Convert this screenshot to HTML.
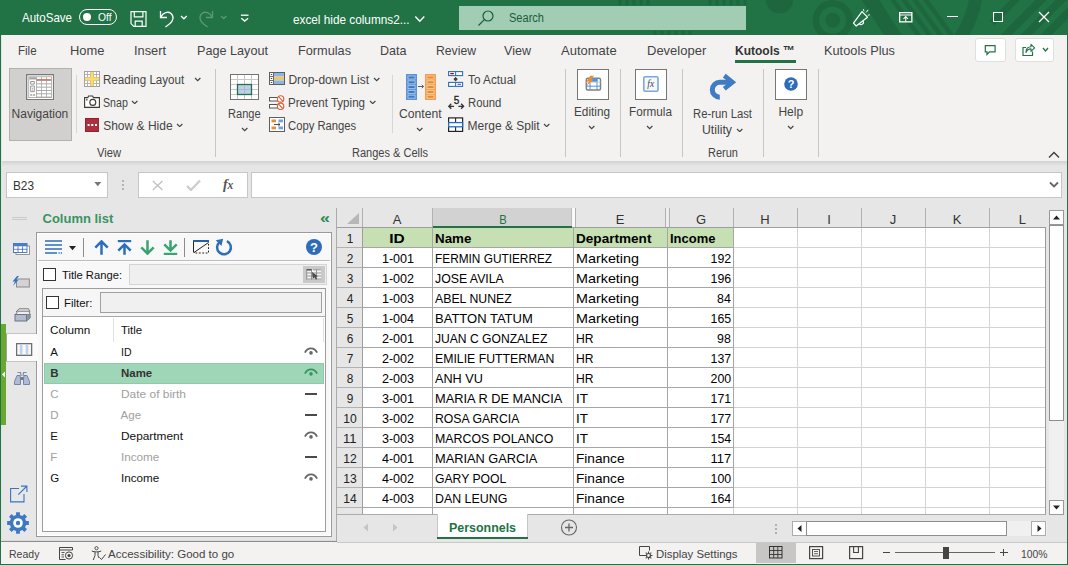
<!DOCTYPE html>
<html><head><meta charset="utf-8"><title>Excel - Kutools Column list</title><style>
html,body{margin:0;padding:0}
body{width:1068px;height:565px;overflow:hidden;position:relative;background:#e6e6e6;font-family:"Liberation Sans",sans-serif;}
.a{position:absolute;display:block}
.t{position:absolute;white-space:nowrap;line-height:1;display:block}
</style></head><body>
<div class="a" style="left:0px;top:0px;width:1068px;height:565px;background:#e6e6e6;"></div>
<div class="a" style="left:0px;top:0px;width:1068px;height:35px;background:#217346;"></div>
<svg class="a" style="left:560px;top:0px" width="508" height="35" viewBox="0 0 508 35">
<g fill="#1e673e">
<path d="M206 0 A13.500 13.500 0 0 0 233 0 Z"/>
<circle cx="272.700" cy="20.200" r="20.200"/>
</g>
<circle cx="272.700" cy="20.200" r="13.500" fill="#217346"/>
<circle cx="272.700" cy="20.200" r="7.500" fill="#1e673e"/>
<g stroke="#1e673e" fill="none">
<path d="M308 -4 L336 40" stroke-width="15"/>
<path d="M330 -4 L362 40 M341 -4 L373 40 M352 -4 L384 40 M363 -4 L395 40" stroke-width="4.500"/>
<path d="M416 -2 Q412 20 400 38" stroke-width="13"/>
<path d="M458 -3 L432 23" stroke-width="7"/>
<path d="M484 -3 L443 38 M504 -3 L463 38 M524 -3 L483 38" stroke-width="8"/>
</g>
<g stroke="#1e673e" stroke-width="3">
<path d="M60 0v5M67 0v5M74 0v5M81 0v5M88 0v5M150 0v5M157 0v5M164 0v5M171 0v5M178 0v5M185 0v5"/>
<path d="M95 31v4M102 31v4M109 31v4M116 31v4M123 31v4M130 31v4"/>
</g>
</svg>
<div class="a" style="left:1px;top:35px;width:1066px;height:126px;background:#f3f2f1;"></div>
<div class="a" style="left:1px;top:161px;width:1066px;height:5px;background:linear-gradient(#d2d2d2,#e6e6e6)"></div>
<div class="a" style="left:0px;top:35px;width:1px;height:530px;background:#217346;"></div>
<div class="a" style="left:1067px;top:35px;width:1px;height:530px;background:#217346;"></div>
<div class="a" style="left:0px;top:564px;width:1068px;height:1px;background:#217346;"></div>
<div class="a" style="left:1px;top:35px;width:1px;height:529px;background:#dfe5e0;"></div>
<span class="t" id="t1" style="top:11.15px;font-size:13px;color:#fff;left:22px;transform-origin:0 50%;transform:scaleX(0.8869);">AutoSave</span>
<div class="a" style="left:79px;top:9px;width:38px;height:16px;border:1.300px solid #fff;border-radius:8px;box-sizing:border-box"></div>
<div class="a" style="left:83px;top:13px;width:8px;height:8px;border-radius:4px;background:#fff"></div>
<span class="t" id="t2" style="top:12.17px;font-size:10.5px;color:#fff;left:98px;transform-origin:0 50%;transform:scaleX(0.9774);">Off</span>
<svg class="a" style="left:129.5px;top:10px" width="18" height="18" viewBox="0 0 18 18"><path d="M1 1.600h15v14.800h-12.200l-2.800-2.800z M4.300 1.600v5.200h8.600v-5.200 M5.200 16.400v-5.200h7v5.200" fill="none" stroke="#fff" stroke-width="1.200"/></svg>
<svg class="a" style="left:159px;top:9px" width="17" height="19" viewBox="0 0 17 19"><path d="M1.5 2v6.5h6.5 M1.8 8.2 C4 3.5 9 2 12 4.5 C15.5 7.5 14 12 11 14.5 L6.5 18" fill="none" stroke="#fff" stroke-width="1.3"/></svg>
<svg class="a" style="left:180.3px;top:15.4px" width="7.8" height="4.7" viewBox="0 0 7.8 4.7"><path d="M1 1 L3.9 3.7 L6.8 1" fill="none" stroke="#fff" stroke-width="1.4"/></svg>
<svg class="a" style="left:197px;top:9px" width="17" height="19" viewBox="0 0 17 19"><path d="M15.5 2v6.5h-6.5 M15.2 8.2 C13 3.5 8 2 5 4.5 C1.5 7.5 3 12 6 14.5 L10.5 18" fill="none" stroke="#5c9878" stroke-width="1.3"/></svg>
<svg class="a" style="left:219.5px;top:15.4px" width="7.4" height="4.5" viewBox="0 0 7.4 4.5"><path d="M1 1 L3.7 3.5 L6.4 1" fill="none" stroke="#5c9878" stroke-width="1.3"/></svg>
<svg class="a" style="left:240px;top:14px" width="10" height="9" viewBox="0 0 10 9"><path d="M0.900 1.200h7.600" stroke="#fff" stroke-width="1.300"/><path d="M1.300 4.200 L4.700 7 L8.100 4.200" fill="none" stroke="#fff" stroke-width="1.400"/></svg>
<span class="t" id="t3" style="top:12.65px;font-size:13px;color:#fff;left:293px;transform-origin:0 50%;transform:scaleX(0.9057);">excel hide columns2...</span>
<svg class="a" style="left:414px;top:15px" width="12" height="9" viewBox="0 0 12 9"><path d="M1.300 1.600 L5.800 6.300 L10.300 1.600" fill="none" stroke="#fff" stroke-width="1.400"/></svg>
<div class="a" style="left:459px;top:6px;width:287px;height:24px;background:#a0cdb4;"></div>
<svg class="a" style="left:477px;top:9px" width="18" height="18" viewBox="0 0 18 18"><circle cx="11" cy="7" r="5" fill="none" stroke="#1e5c3a" stroke-width="1.2"/><path d="M7.3 10.7 L1.5 16.5" stroke="#1e5c3a" stroke-width="1.2"/></svg>
<span class="t" id="t4" style="top:12.19px;font-size:12.5px;color:#1e5c3a;left:509px;transform-origin:0 50%;transform:scaleX(0.8836);">Search</span>
<svg class="a" style="left:852px;top:7px" width="20" height="21" viewBox="0 0 20 21"><path d="M1.500 16.200 L10 4.600 L15.500 10.200 L4.200 19 Z" fill="none" stroke="#fff" stroke-width="1.200" stroke-linejoin="round"/><path d="M7.300 16.600 A2.100 2.100 0 0 0 11 14" fill="none" stroke="#fff" stroke-width="1.100"/><path d="M12 4.200 L11.300 2.200 M14 5.500 L16.300 2.800 M15.800 8.300 L17.800 7.800" stroke="#fff" stroke-width="1"/></svg>
<svg class="a" style="left:899px;top:12px" width="14" height="11" viewBox="0 0 14 11"><rect x="0.650" y="0.650" width="12.200" height="9.200" fill="none" stroke="#fff" stroke-width="1.300"/><path d="M0.600 3h12.300 M6.750 9.500V4.800 M4.500 6.900 L6.750 4.600 L9 6.900" fill="none" stroke="#fff" stroke-width="1.100"/></svg>
<div class="a" style="left:947px;top:16px;width:10.5px;height:1.3px;background:#fff;"></div>
<div class="a" style="left:993px;top:12px;width:10px;height:10px;border:1.3px solid #fff;box-sizing:border-box"></div>
<svg class="a" style="left:1038px;top:11px" width="12" height="12" viewBox="0 0 12 12"><path d="M1 1 L11 11 M11 1 L1 11" stroke="#fff" stroke-width="1.3"/></svg>
<span class="t" id="t5" style="top:44.15px;font-size:13px;color:#444;left:18.2px;transform-origin:0 50%;transform:scaleX(0.8877);">File</span>
<span class="t" id="t6" style="top:44.15px;font-size:13px;color:#444;left:70px;transform-origin:0 50%;transform:scaleX(0.9946);">Home</span>
<span class="t" id="t7" style="top:44.15px;font-size:13px;color:#444;left:134px;transform-origin:0 50%;transform:scaleX(0.9841);">Insert</span>
<span class="t" id="t8" style="top:44.15px;font-size:13px;color:#444;left:197px;transform-origin:0 50%;transform:scaleX(0.9724);">Page Layout</span>
<span class="t" id="t9" style="top:44.15px;font-size:13px;color:#444;left:298px;transform-origin:0 50%;transform:scaleX(0.9781);">Formulas</span>
<span class="t" id="t10" style="top:44.15px;font-size:13px;color:#444;left:380px;transform-origin:0 50%;transform:scaleX(0.9647);">Data</span>
<span class="t" id="t11" style="top:44.15px;font-size:13px;color:#444;left:436px;transform-origin:0 50%;transform:scaleX(0.9384);">Review</span>
<span class="t" id="t12" style="top:44.15px;font-size:13px;color:#444;left:504px;transform-origin:0 50%;transform:scaleX(0.9659);">View</span>
<span class="t" id="t13" style="top:44.15px;font-size:13px;color:#444;left:561px;transform-origin:0 50%;">Automate</span>
<span class="t" id="t14" style="top:44.15px;font-size:13px;color:#444;left:647px;transform-origin:0 50%;">Developer</span>
<span class="t" id="t15" style="top:44.15px;font-size:13px;color:#333;font-weight:700;left:735px;transform-origin:0 50%;transform:scaleX(0.9231);">Kutools ™</span>
<div class="a" style="left:735px;top:60px;width:61px;height:3px;background:#217346;"></div>
<span class="t" id="t16" style="top:44.15px;font-size:13px;color:#444;left:824px;transform-origin:0 50%;transform:scaleX(0.9825);">Kutools Plus</span>
<div class="a" style="left:974.5px;top:38px;width:31px;height:23.500px;background:#fff;border:1px solid #e1dfdd;border-radius:3px;box-sizing:border-box"></div>
<svg class="a" style="left:983px;top:43px" width="14" height="13" viewBox="0 0 14 13"><path d="M2.300 2.600h9.800v6.200h-5.600l-2.500 2.700v-2.700h-1.700z" fill="none" stroke="#217346" stroke-width="1.200"/></svg>
<div class="a" style="left:1014.5px;top:38px;width:39.500px;height:23.500px;background:#fff;border:1px solid #e1dfdd;border-radius:3px;box-sizing:border-box"></div>
<svg class="a" style="left:1021px;top:42px" width="15" height="15" viewBox="0 0 15 15"><path d="M5 5.5h-3v8h9.5v-4" fill="none" stroke="#217346" stroke-width="1.2"/><path d="M5 10.5 C5 6.5 7.5 4.8 10 4.8 V2.3 L13.6 5.8 L10 9.3 V6.9 C8 6.9 6 7.8 5 10.5Z" fill="none" stroke="#217346" stroke-width="1.1" stroke-linejoin="round"/></svg>
<svg class="a" style="left:1041.8px;top:47.4px" width="7" height="5" viewBox="0 0 7 5"><path d="M1 1 L3.5 4 L6 1" fill="none" stroke="#217346" stroke-width="1.3"/></svg>
<div class="a" style="left:9px;top:68px;width:63px;height:73px;background:#d2d0ce;border:1px solid #b3b0ad;box-sizing:border-box;"></div>
<svg class="a" style="left:26px;top:74px" width="28" height="26" viewBox="0 0 28 26">
<rect x="0.650" y="0.650" width="26.900" height="25" fill="#fff" stroke="#7a7a7a" stroke-width="1.300"/>
<rect x="2.300" y="2.300" width="23.600" height="21.700" fill="#ababab"/>
<rect x="3.200" y="3.200" width="6.800" height="19.900" fill="#fff"/>
<rect x="3.200" y="3.200" width="6.800" height="2.300" fill="#a6a6a6"/>
<path d="M4.700 7.500h3.600v2.600h-3.600z M4.700 12h3.600v5.600h-3.600z" fill="none" stroke="#8a8a8a" stroke-width="0.900"/>
<path d="M6.500 13.800v0.900 M6.500 15.600v0.900" stroke="#8a8a8a" stroke-width="0.900"/>
<path d="M4.200 21h2.100 M7 21h2.100" stroke="#777" stroke-width="1"/>
<g fill="#fff"><rect x="10.9" y="3.20" width="4.200" height="2.2"/><rect x="10.9" y="7.02" width="4.200" height="2.3"/><rect x="10.9" y="10.34" width="4.200" height="2.3"/><rect x="10.9" y="13.66" width="4.200" height="2.3"/><rect x="10.9" y="16.98" width="4.200" height="2.3"/><rect x="10.9" y="20.30" width="4.200" height="2.3"/><rect x="15.9" y="3.20" width="4.200" height="2.2"/><rect x="15.9" y="7.02" width="4.200" height="2.3"/><rect x="15.9" y="10.34" width="4.200" height="2.3"/><rect x="15.9" y="13.66" width="4.200" height="2.3"/><rect x="15.9" y="16.98" width="4.200" height="2.3"/><rect x="15.9" y="20.30" width="4.200" height="2.3"/><rect x="20.9" y="3.20" width="4.200" height="2.2"/><rect x="20.9" y="7.02" width="4.200" height="2.3"/><rect x="20.9" y="10.34" width="4.200" height="2.3"/><rect x="20.9" y="13.66" width="4.200" height="2.3"/><rect x="20.9" y="16.98" width="4.200" height="2.3"/><rect x="20.9" y="20.30" width="4.200" height="2.3"/></g>
<path d="M10.900 5.800h14.200" stroke="#e8542c" stroke-width="0.900"/>
</svg>
<span class="t" id="t17" style="top:108.14px;font-size:12px;color:#444;left:11.6px;transform-origin:0 50%;">Navigation</span>
<div class="a" style="left:76px;top:75px;width:1px;height:58px;background:#d8d6d4;"></div>
<svg class="a" style="left:84px;top:71px" width="16" height="16" viewBox="0 0 16 16">
<rect x="0" y="0" width="16" height="16" fill="#a3a3a3"/>
<g fill="#fff"><rect x="1" y="1" width="2.200" height="2.200"/><rect x="4" y="1" width="2.200" height="2.200"/><rect x="1" y="4" width="2.200" height="2.200"/><rect x="4" y="4" width="2.200" height="2.200"/>
<rect x="9.800" y="1" width="2.200" height="2.200"/><rect x="12.800" y="1" width="2.200" height="2.200"/><rect x="9.800" y="4" width="2.200" height="2.200"/><rect x="12.800" y="4" width="2.200" height="2.200"/>
<rect x="1" y="9.800" width="2.200" height="2.200"/><rect x="4" y="9.800" width="2.200" height="2.200"/><rect x="1" y="12.800" width="2.200" height="2.200"/><rect x="4" y="12.800" width="2.200" height="2.200"/>
<rect x="9.800" y="9.800" width="2.200" height="2.200"/><rect x="12.800" y="9.800" width="2.200" height="2.200"/><rect x="9.800" y="12.800" width="2.200" height="2.200"/><rect x="12.800" y="12.800" width="2.200" height="2.200"/></g>
<rect x="6.500" y="1" width="3" height="14" fill="#ffd968"/><rect x="1" y="6.500" width="14" height="3" fill="#ffd968"/>
</svg>
<span class="t" id="t18" style="top:74.14px;font-size:12px;color:#444;left:103.2px;transform-origin:0 50%;transform:scaleX(0.9658);">Reading Layout</span>
<svg class="a" style="left:194.3px;top:77.4px" width="7.4" height="4.6" viewBox="0 0 7.4 4.6"><path d="M1 1 L3.7 3.6 L6.4 1" fill="none" stroke="#444" stroke-width="1.2"/></svg>
<svg class="a" style="left:84px;top:95px" width="16" height="13" viewBox="0 0 16 13"><path d="M0.600 2.600h3.200l0.800-1.600h4l0.800 1.600h6v9.800h-14.800z" fill="#fff" stroke="#3b3a39" stroke-width="1.1"/><circle cx="8.800" cy="7.400" r="3" fill="none" stroke="#3b3a39" stroke-width="1.1"/><rect x="2" y="4.200" width="1.600" height="1.200" fill="#3b3a39"/></svg>
<span class="t" id="t19" style="top:96.74px;font-size:12px;color:#444;left:103.2px;transform-origin:0 50%;transform:scaleX(0.8847);">Snap</span>
<svg class="a" style="left:131.4px;top:99.9px" width="7.4" height="4.6" viewBox="0 0 7.4 4.6"><path d="M1 1 L3.7 3.6 L6.4 1" fill="none" stroke="#444" stroke-width="1.2"/></svg>
<svg class="a" style="left:84.5px;top:118px" width="14.5" height="14" viewBox="0 0 14.5 14"><rect x="0.500" y="0.500" width="13.500" height="13" fill="#ad2e3c" stroke="#8e2330"/><rect x="2.600" y="6" width="2" height="2" fill="#fff"/><rect x="6.300" y="6" width="2" height="2" fill="#fff"/><rect x="10" y="6" width="2" height="2" fill="#fff"/></svg>
<span class="t" id="t20" style="top:119.54px;font-size:12px;color:#444;left:103.2px;transform-origin:0 50%;">Show &amp; Hide</span>
<svg class="a" style="left:175.60000000000002px;top:122.9px" width="7.4" height="4.6" viewBox="0 0 7.4 4.6"><path d="M1 1 L3.7 3.6 L6.4 1" fill="none" stroke="#444" stroke-width="1.2"/></svg>
<span class="t" id="t21" style="top:147.14px;font-size:12px;color:#444;left:108.6px;transform-origin:50% 50%;transform:translateX(-50%) scaleX(0.9303);">View</span>
<div class="a" style="left:215px;top:69px;width:1px;height:88px;background:#c8c6c4;"></div>
<svg class="a" style="left:230px;top:74px" width="29" height="26" viewBox="0 0 29 26">
<rect x="0.500" y="0.500" width="28" height="25" fill="#fff"/>
<path d="M0 5.500h29 M0 10.500h29 M0 15.500h29 M0 20.500h29 M7.500 0v26 M14.500 0v26 M21.500 0v26" stroke="#c6c6c6" stroke-width="1"/>
<rect x="0.500" y="0.500" width="28" height="25" fill="none" stroke="#737373"/>
<rect x="7.500" y="10.500" width="14" height="10" fill="#bdd0ea" stroke="#217346" stroke-width="1.300"/>
<path d="M8.500 15.500h12 M14.500 11.500v8" stroke="#aab8cc" stroke-width="0.900"/>
</svg>
<span class="t" id="t22" style="top:108.14px;font-size:12px;color:#444;left:228.4px;transform-origin:0 50%;transform:scaleX(0.9216);">Range</span>
<svg class="a" style="left:240.8px;top:127.4px" width="7.4" height="4.6" viewBox="0 0 7.4 4.6"><path d="M1 1 L3.7 3.6 L6.4 1" fill="none" stroke="#444" stroke-width="1.2"/></svg>
<svg class="a" style="left:269px;top:72px" width="16" height="13" viewBox="0 0 16 13">
<rect x="0.500" y="0.500" width="15" height="12" fill="#fff" stroke="#605e5c"/>
<rect x="4.500" y="1" width="10.500" height="3.500" fill="#8ab4e8"/><rect x="4.500" y="4.500" width="10.500" height="4" fill="#e8c66e"/><rect x="4.500" y="8.500" width="10.500" height="3.500" fill="#8ab4e8"/>
<path d="M4.500 0.500v12 M0.500 4.500h4 M0.500 8.500h4" stroke="#605e5c" stroke-width="0.900"/>
<path d="M1.800 2.500h1.400 M1.800 6.500h1.400 M1.800 10.500h1.400" stroke="#3b3a39" stroke-width="1"/>
</svg>
<span class="t" id="t23" style="top:74.14px;font-size:12px;color:#444;left:288.4px;transform-origin:0 50%;">Drop-down List</span>
<svg class="a" style="left:372.8px;top:77.4px" width="7.4" height="4.6" viewBox="0 0 7.4 4.6"><path d="M1 1 L3.7 3.6 L6.4 1" fill="none" stroke="#444" stroke-width="1.2"/></svg>
<svg class="a" style="left:269px;top:95px" width="17" height="15" viewBox="0 0 17 15">
<rect x="0.500" y="2.500" width="8" height="3.500" fill="#fff" stroke="#555" stroke-width="1"/><rect x="0.500" y="9.500" width="8" height="3.500" fill="#fff" stroke="#555" stroke-width="1"/>
<circle cx="11.600" cy="3.900" r="3.200" fill="#fff" stroke="#e0603a" stroke-width="1.150"/><path d="M9.500 1.700 L13.800 6.100" stroke="#e0603a" stroke-width="1.150"/>
<circle cx="11.600" cy="11.300" r="3.200" fill="#fff" stroke="#e0603a" stroke-width="1.150"/><path d="M9.500 9.100 L13.800 13.500" stroke="#e0603a" stroke-width="1.150"/>
</svg>
<span class="t" id="t24" style="top:96.74px;font-size:12px;color:#444;left:288.4px;transform-origin:0 50%;transform:scaleX(0.9646);">Prevent Typing</span>
<svg class="a" style="left:368.8px;top:99.9px" width="7.4" height="4.6" viewBox="0 0 7.4 4.6"><path d="M1 1 L3.7 3.6 L6.4 1" fill="none" stroke="#444" stroke-width="1.2"/></svg>
<svg class="a" style="left:269px;top:117px" width="16" height="15" viewBox="0 0 16 15">
<rect x="0.500" y="0.500" width="15" height="14" fill="#fff" stroke="#605e5c"/>
<rect x="2.500" y="2.500" width="4.500" height="2.800" fill="#ed8b3a"/><rect x="9.500" y="2.500" width="4.500" height="2.800" fill="#6fa1dc"/>
<rect x="2.500" y="9.500" width="4.500" height="2.800" fill="#ed8b3a"/><rect x="9.500" y="9.500" width="4.500" height="2.800" fill="#6fa1dc"/>
<path d="M5 7.500h6 M9.300 6 L11 7.500 L9.300 9" fill="none" stroke="#3b3a39" stroke-width="0.900"/>
</svg>
<span class="t" id="t25" style="top:119.54px;font-size:12px;color:#444;left:288.4px;transform-origin:0 50%;transform:scaleX(0.9379);">Copy Ranges</span>
<div class="a" style="left:392px;top:75px;width:1px;height:58px;background:#d8d6d4;"></div>
<svg class="a" style="left:406px;top:74px" width="31" height="26" viewBox="0 0 31 26">
<rect x="0" y="0" width="11" height="26" fill="#5b94d6"/><rect x="19" y="0" width="11" height="26" fill="#f0a050"/>
<g fill="#3f78be" stroke="#a8c6ea" stroke-width="0.900"><rect x="2" y="2" width="7" height="3"/><rect x="2" y="6.800" width="7" height="3"/><rect x="2" y="11.600" width="7" height="3"/><rect x="2" y="16.400" width="7" height="3"/><rect x="2" y="21.200" width="7" height="3"/></g>
<g fill="#e88a33" stroke="#f8cfa0" stroke-width="0.900"><rect x="21" y="2" width="7" height="3"/><rect x="21" y="6.800" width="7" height="3"/><rect x="21" y="11.600" width="7" height="3"/><rect x="21" y="16.400" width="7" height="3"/><rect x="21" y="21.200" width="7" height="3"/></g>
<path d="M12 12.500h5.500 M15.800 10.800 L17.600 12.500 L15.800 14.200" fill="none" stroke="#605e5c" stroke-width="1"/>
</svg>
<span class="t" id="t26" style="top:108.14px;font-size:12px;color:#444;left:399.4px;transform-origin:0 50%;transform:scaleX(1.0135);">Content</span>
<svg class="a" style="left:416.40000000000003px;top:127.4px" width="7.4" height="4.6" viewBox="0 0 7.4 4.6"><path d="M1 1 L3.7 3.6 L6.4 1" fill="none" stroke="#444" stroke-width="1.2"/></svg>
<svg class="a" style="left:448px;top:71px" width="16" height="16" viewBox="0 0 16 16">
<rect x="0.600" y="0.600" width="14" height="4" fill="#fff" stroke="#2f6fbd" stroke-width="1.100"/><rect x="0.600" y="11.400" width="14" height="4" fill="#fff" stroke="#2f6fbd" stroke-width="1.100"/>
<path d="M7.600 0.600v4 M7.600 11.400v4" stroke="#2f6fbd"/>
<path d="M2.300 2.600h3.500" stroke="#c00000" stroke-width="1.300"/><path d="M9.500 13.400h3.500" stroke="#7a5fd0" stroke-width="1.300"/>
<path d="M7.600 6v3.600 M5.900 7.800 L7.600 9.600 L9.300 7.800 M5.900 7.600h3.400" fill="none" stroke="#444" stroke-width="1.100"/>
</svg>
<span class="t" id="t27" style="top:74.14px;font-size:12px;color:#444;left:467.6px;transform-origin:0 50%;transform:scaleX(0.9815);">To Actual</span>
<svg class="a" style="left:447.5px;top:95px" width="17" height="15" viewBox="0 0 17 15">
<text x="8.500" y="8.900" font-family="Liberation Sans, sans-serif" font-size="10" font-weight="400" fill="#222" stroke="#222" stroke-width="0.300" text-anchor="middle">5</text>
<path d="M0.800 11.300h5.200 M3.300 8.800 L0.800 11.300 L3.300 13.800 M10.400 11.300h5.200 M13.100 8.800 L15.600 11.300 L13.100 13.800" fill="none" stroke="#333" stroke-width="1.300"/>
</svg>
<span class="t" id="t28" style="top:96.74px;font-size:12px;color:#444;left:467.6px;transform-origin:0 50%;transform:scaleX(0.9442);">Round</span>
<svg class="a" style="left:448px;top:117px" width="16" height="15" viewBox="0 0 16 15">
<rect x="0.600" y="0.900" width="14" height="13.500" fill="#fff" stroke="#222" stroke-width="1.200"/>
<path d="M7.600 0.900v13.500" stroke="#222" stroke-width="1.100"/>
<rect x="0.600" y="5.600" width="14" height="4.200" fill="#fff" stroke="#1f6fc4" stroke-width="1.300"/>
</svg>
<span class="t" id="t29" style="top:119.54px;font-size:12px;color:#444;left:467.6px;transform-origin:0 50%;">Merge &amp; Split</span>
<svg class="a" style="left:542.8px;top:122.9px" width="7.4" height="4.6" viewBox="0 0 7.4 4.6"><path d="M1 1 L3.7 3.6 L6.4 1" fill="none" stroke="#444" stroke-width="1.2"/></svg>
<span class="t" id="t30" style="top:147.14px;font-size:12px;color:#444;left:390.4px;transform-origin:50% 50%;transform:translateX(-50%) scaleX(0.9188);">Ranges &amp; Cells</span>
<div class="a" style="left:565px;top:69px;width:1px;height:88px;background:#c8c6c4;"></div>
<div class="a" style="left:577px;top:69px;width:32px;height:31px;background:#fff;border:1px solid #767676;box-sizing:border-box;"></div>
<svg class="a" style="left:584.5px;top:75px" width="18" height="17" viewBox="0 0 18 17">
<rect x="1.300" y="3.200" width="14.200" height="11.800" rx="1.500" fill="#fff" stroke="#808080" stroke-width="1.500"/>
<rect x="5.500" y="3" width="7" height="3.800" fill="#4e95dd"/>
<path d="M5 7v8 M12 4v11 M1.300 11.200h14.200" stroke="#4e95dd" stroke-width="1"/>
<path d="M1.300 7.300h14.200" stroke="#c8c8c8" stroke-width="0.800"/>
<path d="M5.300 0.800 L9 0.800 L6.300 4.600 L8.500 4.600 L1.500 11 L3.800 6.500 L1.500 6.500 Z" fill="#f28b30"/>
</svg>
<span class="t" id="t31" style="top:105.94px;font-size:12px;color:#444;left:574.4px;transform-origin:0 50%;transform:scaleX(0.9808);">Editing</span>
<svg class="a" style="left:588.4px;top:125.4px" width="7.4" height="4.6" viewBox="0 0 7.4 4.6"><path d="M1 1 L3.7 3.6 L6.4 1" fill="none" stroke="#444" stroke-width="1.2"/></svg>
<div class="a" style="left:620px;top:69px;width:1px;height:88px;background:#c8c6c4;"></div>
<div class="a" style="left:635px;top:69px;width:32px;height:31px;background:#fff;border:1px solid #767676;box-sizing:border-box;"></div>
<svg class="a" style="left:642.5px;top:76px" width="17" height="17" viewBox="0 0 17 17">
<rect x="0.800" y="0.800" width="14.200" height="14.400" rx="1.500" fill="#f4f8fd" stroke="#7ba7dd" stroke-width="1.600"/>
<text x="7.800" y="11" font-family="Liberation Serif, serif" font-style="italic" font-size="9.500" fill="#444" text-anchor="middle">fx</text>
</svg>
<span class="t" id="t32" style="top:105.94px;font-size:12px;color:#444;left:629.4px;transform-origin:0 50%;transform:scaleX(0.9769);">Formula</span>
<svg class="a" style="left:646.1999999999999px;top:125.4px" width="7.4" height="4.6" viewBox="0 0 7.4 4.6"><path d="M1 1 L3.7 3.6 L6.4 1" fill="none" stroke="#444" stroke-width="1.2"/></svg>
<div class="a" style="left:682px;top:69px;width:1px;height:88px;background:#c8c6c4;"></div>
<svg class="a" style="left:709px;top:73px" width="28" height="28" viewBox="0 0 28 28"><path d="M10.800 24.200 A7.500 7.500 0 0 1 10.800 9.200 L22.500 9.200" fill="none" stroke="#3f7cc4" stroke-width="5"/><path d="M15.300 2.600 L23.500 9.200 L15.300 15.800" fill="none" stroke="#3f7cc4" stroke-width="4.600" stroke-linejoin="miter"/></svg>
<span class="t" id="t33" style="top:108.14px;font-size:12px;color:#444;left:693.4px;transform-origin:0 50%;transform:scaleX(0.9409);">Re-run Last</span>
<span class="t" id="t34" style="top:124.14px;font-size:12px;color:#444;left:702.4px;transform-origin:0 50%;transform:scaleX(1.0224);">Utility</span>
<svg class="a" style="left:735.8px;top:127.9px" width="7.4" height="4.6" viewBox="0 0 7.4 4.6"><path d="M1 1 L3.7 3.6 L6.4 1" fill="none" stroke="#444" stroke-width="1.2"/></svg>
<span class="t" id="t35" style="top:147.14px;font-size:12px;color:#444;left:723px;transform-origin:50% 50%;transform:translateX(-50%) scaleX(0.9178);">Rerun</span>
<div class="a" style="left:763px;top:69px;width:1px;height:88px;background:#c8c6c4;"></div>
<div class="a" style="left:775px;top:69px;width:32px;height:31px;background:#fff;border:1px solid #767676;box-sizing:border-box;"></div>
<svg class="a" style="left:784px;top:77px" width="14" height="14" viewBox="0 0 14 14"><circle cx="7" cy="7" r="6.800" fill="#2e6bb8"/><text x="7" y="11" font-family="Liberation Sans, sans-serif" font-weight="700" font-size="11" fill="#fff" text-anchor="middle">?</text></svg>
<span class="t" id="t36" style="top:105.94px;font-size:12px;color:#444;left:778.4px;transform-origin:0 50%;">Help</span>
<svg class="a" style="left:786.5999999999999px;top:125.4px" width="7.4" height="4.6" viewBox="0 0 7.4 4.6"><path d="M1 1 L3.7 3.6 L6.4 1" fill="none" stroke="#444" stroke-width="1.2"/></svg>
<div class="a" style="left:818px;top:69px;width:1px;height:88px;background:#c8c6c4;"></div>
<svg class="a" style="left:1048px;top:151px" width="12" height="8" viewBox="0 0 12 8"><path d="M1 6.500 L6 1.500 L11 6.500" fill="none" stroke="#3b3a39" stroke-width="1.300"/></svg>
<div class="a" style="left:6px;top:172px;width:102px;height:26px;background:#fff;border:1px solid #c6c6c6;box-sizing:border-box;"></div>
<span class="t" id="t37" style="top:179.64px;font-size:12px;color:#333;left:13px;transform-origin:0 50%;transform:scaleX(0.9832);">B23</span>
<svg class="a" style="left:94px;top:182px" width="8" height="5" viewBox="0 0 8 5"><path d="M0.300 0h7l-3.500 4.200z" fill="#777"/></svg>
<div class="a" style="left:122px;top:180px;width:2px;height:2px;background:#b4b4b4;"></div>
<div class="a" style="left:122px;top:184px;width:2px;height:2px;background:#b4b4b4;"></div>
<div class="a" style="left:122px;top:188px;width:2px;height:2px;background:#b4b4b4;"></div>
<div class="a" style="left:138px;top:172px;width:110px;height:26px;background:#fff;border:1px solid #c6c6c6;box-sizing:border-box;"></div>
<svg class="a" style="left:151.5px;top:180px" width="12" height="11" viewBox="0 0 12 11"><path d="M0.800 1 L10.500 10 M10.500 1 L0.800 10" stroke="#c2c2c2" stroke-width="1.400"/></svg>
<svg class="a" style="left:186px;top:179px" width="15" height="12" viewBox="0 0 15 12"><path d="M1 7 L5 11 L14 1.500" fill="none" stroke="#cbcbcb" stroke-width="2.200"/></svg>
<span class="t" style="left:223px;top:177.500px;font-family:'Liberation Serif',serif;font-style:italic;font-weight:700;font-size:14px;color:#555;letter-spacing:-0.2px">f<span style="font-size:11.500px">x</span></span>
<div class="a" style="left:251px;top:172px;width:811px;height:26px;background:#fff;border:1px solid #c6c6c6;box-sizing:border-box;"></div>
<svg class="a" style="left:1049px;top:181px" width="10" height="8" viewBox="0 0 10 8"><path d="M1 1.500 L5 5.500 L9 1.500" fill="none" stroke="#666" stroke-width="1.800"/></svg>
<div class="a" style="left:12px;top:217px;width:15px;height:1px;background:#cacaca;"></div>
<div class="a" style="left:12px;top:219px;width:15px;height:1px;background:#cacaca;"></div>
<span class="t" id="t38" style="top:212.05px;font-size:13px;color:#3a9462;font-weight:700;left:42.5px;transform-origin:0 50%;">Column list</span>
<span class="t" id="t39" style="top:209.67px;font-size:15px;color:#2e8b57;font-weight:700;left:319.5px;transform-origin:0 50%;transform:scaleX(1.1985);">«</span>
<div class="a" style="left:1px;top:324px;width:5px;height:101px;background:#6aa732;"></div>
<svg class="a" style="left:1px;top:371px" width="5" height="7" viewBox="0 0 5 7"><path d="M4 0.500 L1 3.500 L4 6.500Z" fill="#fff"/></svg>
<div class="a" style="left:6px;top:232px;width:30px;height:304px;background:#e7e7e7;"></div>
<div class="a" style="left:36px;top:232px;width:1px;height:101px;background:#b8b8b8;"></div>
<div class="a" style="left:36px;top:362px;width:1px;height:175px;background:#b8b8b8;"></div>
<div class="a" style="left:6px;top:333px;width:31px;height:29px;background:#fbfbfb;"></div>
<div class="a" style="left:6px;top:333px;width:30px;height:1px;background:#c4c4c4;"></div>
<div class="a" style="left:6px;top:361px;width:30px;height:1px;background:#c4c4c4;"></div>
<div class="a" style="left:36px;top:232px;width:296px;height:305px;background:#f8f8f8;border:1px solid #9a9a9a;box-sizing:border-box;"></div>
<div class="a" style="left:37px;top:233px;width:294px;height:303px;border:1px solid #ffffff;box-sizing:border-box;"></div>
<div class="a" style="left:36px;top:334px;width:2px;height:27px;background:#fbfbfb;"></div>
<div class="a" style="left:6px;top:334px;width:1px;height:27px;background:#a0a0a0;"></div>
<div class="a" style="left:38px;top:260px;width:292px;height:1px;background:#bdbdbd;"></div>
<div class="a" style="left:38px;top:261px;width:292px;height:1px;background:#fdfdfd;"></div>
<svg class="a" style="left:13px;top:243px" width="17" height="12" viewBox="0 0 17 12"><rect x="3" y="3" width="13.500" height="8.500" fill="#fff" stroke="#8a8a8a" stroke-width="0.900"/><rect x="0.500" y="0.500" width="13.500" height="9" fill="#fff" stroke="#3f6fb5" stroke-width="0.900"/><rect x="0.500" y="0.500" width="13.500" height="2.800" fill="#4a7cc4"/><path d="M0.500 6.300h13.500 M5 3.300v6.200 M9.500 3.300v6.200" stroke="#3f6fb5" stroke-width="0.800"/></svg>
<svg class="a" style="left:12px;top:276px" width="18" height="12" viewBox="0 0 18 12"><rect x="4.500" y="3" width="12.800" height="8" fill="#d4d4d4" stroke="#8a8a8a"/><path d="M5 0 L0.500 5.500 L3 5.500 L1 10 L6.500 3.800 L4 3.800 L7 0Z" fill="#3a74c0"/></svg>
<svg class="a" style="left:14px;top:308px" width="17" height="14" viewBox="0 0 17 14"><path d="M2 4 L5 0.800 L14.500 0.800 L16 4" fill="#eee" stroke="#777"/><path d="M1.500 6.500 L4 3.200 L14.800 3.200 L16.200 6.500" fill="#eee" stroke="#777"/><rect x="1" y="6.500" width="11.500" height="6.500" fill="#b4bccb" stroke="#6b7485"/><path d="M12.500 6.500 L16.200 6.500 L16.200 10 L12.500 13Z" fill="#8e98ab" stroke="#6b7485" stroke-width="0.800"/></svg>
<svg class="a" style="left:16px;top:343px" width="17" height="13" viewBox="0 0 17 13"><rect x="0.650" y="0.650" width="15" height="11.700" fill="#e4e4e4" stroke="#707070" stroke-width="1.300"/><rect x="3.900" y="1.300" width="2.500" height="10.400" fill="#bcd3ee"/><rect x="9.800" y="1.300" width="2.500" height="10.400" fill="#bcd3ee"/><g fill="#fff"><rect x="1.5" y="1.7" width="2.2" height="1.900"/><rect x="1.5" y="4.2" width="2.2" height="1.900"/><rect x="1.5" y="6.7" width="2.2" height="1.900"/><rect x="1.5" y="9.2" width="2.2" height="1.900"/><rect x="6.7" y="1.7" width="2.8" height="1.900"/><rect x="6.7" y="4.2" width="2.8" height="1.900"/><rect x="6.7" y="6.7" width="2.8" height="1.900"/><rect x="6.7" y="9.2" width="2.8" height="1.900"/><rect x="12.5" y="1.7" width="2.2" height="1.900"/><rect x="12.5" y="4.2" width="2.2" height="1.900"/><rect x="12.5" y="6.7" width="2.2" height="1.900"/><rect x="12.5" y="9.2" width="2.2" height="1.900"/></g></svg>
<svg class="a" style="left:13.5px;top:372px" width="16" height="13" viewBox="0 0 16 13"><path d="M3.500 0.500h3l0.600 3.500 M9 4 L9.600 0.500h3" fill="none" stroke="#7f8aa3" stroke-width="1.200"/><path d="M3 3.500 L0.500 9.500 V12.500 H6.500 V7 L6 3.500Z M13 3.500 L15.500 9.500 V12.500 H9.500 V7 L10 3.500Z" fill="#aebbd6" stroke="#6f7b96" stroke-width="0.900"/><rect x="6.500" y="5" width="3" height="3" fill="#6f7b96"/></svg>
<svg class="a" style="left:10px;top:485px" width="18" height="18" viewBox="0 0 18 18"><path d="M9 3.500h-8.400v13.400h13.400v-8" fill="none" stroke="#3a74c0" stroke-width="1.100"/><path d="M8.300 9.700 L16.500 1.500 M11 1.100h5.900v5.900" fill="none" stroke="#3a74c0" stroke-width="1.100"/></svg>
<svg class="a" style="left:7px;top:512px" width="22" height="22" viewBox="0 0 22 22"><path d="M9.11 0.16 L12.89 0.16 L12.94 2.93 L15.34 3.92 L17.33 2.00 L20.00 4.67 L18.08 6.66 L19.07 9.06 L21.84 9.11 L21.84 12.89 L19.07 12.94 L18.08 15.34 L20.00 17.33 L17.33 20.00 L15.34 18.08 L12.94 19.07 L12.89 21.84 L9.11 21.84 L9.06 19.07 L6.66 18.08 L4.67 20.00 L2.00 17.33 L3.92 15.34 L2.93 12.94 L0.16 12.89 L0.16 9.11 L2.93 9.06 L3.92 6.66 L2.00 4.67 L4.67 2.00 L6.66 3.92 L9.06 2.93Z" fill="#3c78c3"/><circle cx="11" cy="11" r="4.800" fill="#fff"/><circle cx="11" cy="11" r="2.200" fill="#3c78c3"/></svg>
<svg class="a" style="left:45px;top:240px" width="17" height="14" viewBox="0 0 17 14"><path d="M0 1h17 M0 5h17 M0 9h17 M0 13h12" stroke="#2e6db8" stroke-width="1.500"/><path d="M13.500 13h1.200 M15.800 13h1.200" stroke="#2e6db8" stroke-width="1.500"/></svg>
<svg class="a" style="left:69px;top:246px" width="7" height="5" viewBox="0 0 7 5"><path d="M0 0h7l-3.500 4.200z" fill="#222"/></svg>
<div class="a" style="left:83px;top:238px;width:1px;height:19px;background:#8c8c8c;"></div>
<svg class="a" style="left:94px;top:240px" width="15" height="15" viewBox="0 0 15 15"><path d="M7.500 14.800V1.6 M1.300 7.6 L7.500 1.4 L13.700 7.6" fill="none" stroke="#2e6db8" stroke-width="2.500"/></svg>
<svg class="a" style="left:117.3px;top:240px" width="15" height="15" viewBox="0 0 15 15"><path d="M7.500 14.800V4.6 M1.300 10.6 L7.500 4.4 L13.700 10.6" fill="none" stroke="#2e6db8" stroke-width="2.500"/><path d="M0.800 1.100h13.400" stroke="#2e6db8" stroke-width="2.200"/></svg>
<svg class="a" style="left:140px;top:240px" width="15" height="15" viewBox="0 0 15 15"><path d="M7.500 0.200V13.4 M1.300 7.4 L7.500 13.6 L13.700 7.4" fill="none" stroke="#3aa374" stroke-width="2.500"/></svg>
<svg class="a" style="left:163px;top:240px" width="15" height="15" viewBox="0 0 15 15"><path d="M7.500 0.200V10.4 M1.300 4.4 L7.500 10.6 L13.700 4.4" fill="none" stroke="#3aa374" stroke-width="2.500"/><path d="M0.800 13.900h13.400" stroke="#3aa374" stroke-width="2.200"/></svg>
<div class="a" style="left:184px;top:238px;width:1px;height:19px;background:#8c8c8c;"></div>
<svg class="a" style="left:193px;top:240px" width="17" height="14" viewBox="0 0 17 14"><rect x="0" y="0" width="16" height="2" fill="#1f5fae"/><path d="M15.500 2.500 L1 12.500" stroke="#222" stroke-width="1"/><path d="M0.500 2v10 L1.500 13" fill="none" stroke="#222" stroke-width="1"/><path d="M2.500 13h13v-11" fill="none" stroke="#222" stroke-width="1" stroke-dasharray="1.800 1.600"/></svg>
<svg class="a" style="left:215px;top:238px" width="18" height="18" viewBox="0 0 18 18"><path d="M11.920 3.150 A6.900 6.900 0 1 1 4.560 4.110" fill="none" stroke="#2e6db8" stroke-width="2.500"/><path d="M0.800 2.300 L8.200 0.800 L6.400 7.900Z" fill="#2e6db8"/></svg>
<svg class="a" style="left:306px;top:239px" width="16" height="16" viewBox="0 0 16 16"><circle cx="8" cy="8" r="8" fill="#2e6bb8"/><text x="8" y="12.600" font-family="Liberation Sans, sans-serif" font-weight="700" font-size="13" fill="#fff" text-anchor="middle">?</text></svg>
<div class="a" style="left:43px;top:268px;width:13px;height:13px;background:#fff;border:1px solid #333;box-sizing:border-box;"></div>
<span class="t" id="t40" style="top:269.58px;font-size:11.5px;color:#111;left:61.6px;transform-origin:0 50%;transform:scaleX(0.9744);">Title Range:</span>
<div class="a" style="left:129px;top:264px;width:198px;height:21px;background:#efefef;border:1px solid #d4d4d4;box-sizing:border-box;"></div>
<div class="a" style="left:303px;top:266px;width:22px;height:17px;background:#c9c9c9;"></div>
<svg class="a" style="left:305.5px;top:268.5px" width="16" height="11" viewBox="0 0 16 11"><rect x="0.500" y="0.500" width="14.500" height="10" fill="#f4f4f4"/><path d="M0.500 0.800h5.500" stroke="#555" stroke-width="1.600"/><path d="M7 0.800h8 M0.500 4h14.500 M0.500 7h14.500 M0.500 10h14.500 M0.700 0.500v10 M5.500 0.500v10 M10.500 0.500v10" stroke="#8a8a8a" stroke-width="0.900"/><path d="M6 3 L12 7.200 L9.800 7.800 L11 10 L9.800 10.500 L8.600 8.300 L6.800 9.800Z" fill="#4a4a4a"/></svg>
<div class="a" style="left:42px;top:288px;width:284px;height:244px;background:#f6f6f6;border:1px solid #9c9c9c;box-sizing:border-box;"></div>
<div class="a" style="left:46px;top:296px;width:13px;height:13px;background:#fff;border:1px solid #333;box-sizing:border-box;"></div>
<span class="t" id="t41" style="top:297.58px;font-size:11.5px;color:#111;left:64.4px;transform-origin:0 50%;transform:scaleX(0.9878);">Filter:</span>
<div class="a" style="left:100px;top:292px;width:222px;height:21px;background:#f0f0f0;border:1px solid #a0a0a0;box-sizing:border-box;"></div>
<div class="a" style="left:43px;top:316px;width:282px;height:215px;background:#fff;"></div>
<div class="a" style="left:43px;top:316px;width:282px;height:1px;background:#a8a8a8;"></div>
<div class="a" style="left:113px;top:318px;width:1px;height:24px;background:#e0e0e0;"></div>
<div class="a" style="left:323px;top:318px;width:1px;height:24px;background:#e0e0e0;"></div>
<span class="t" id="t42" style="top:324.58px;font-size:11.5px;color:#111;left:50.3px;transform-origin:0 50%;transform:scaleX(1.0192);">Column</span>
<span class="t" id="t43" style="top:324.58px;font-size:11.5px;color:#111;left:120.6px;transform-origin:0 50%;transform:scaleX(0.9900);">Title</span>
<span class="t" id="t44" style="top:346.78px;font-size:11.5px;color:#111;left:50.3px;transform-origin:0 50%;">A</span>
<span class="t" id="t45" style="top:346.78px;font-size:11.5px;color:#111;left:120.6px;transform-origin:0 50%;transform:scaleX(0.9130);">ID</span>
<svg class="a" style="left:304px;top:347.2px" width="14" height="9" viewBox="0 0 14 9"><path d="M0.900 5.700 C3.500 -0.200 10.500 -0.200 13.100 5.700" fill="none" stroke="#666" stroke-width="1.800"/><circle cx="7" cy="5.900" r="1.800" fill="#666"/></svg>
<div class="a" style="left:44px;top:363px;width:280px;height:21px;background:#9fd6b8;border:1px solid #8fcbaa;box-sizing:border-box;"></div>
<span class="t" id="t46" style="top:367.78px;font-size:11.5px;color:#333;font-weight:700;left:50.3px;transform-origin:0 50%;">B</span>
<span class="t" id="t47" style="top:367.78px;font-size:11.5px;color:#333;font-weight:700;left:120.6px;transform-origin:0 50%;transform:scaleX(0.9959);">Name</span>
<svg class="a" style="left:304px;top:368.2px" width="14" height="9" viewBox="0 0 14 9"><path d="M0.900 5.700 C3.500 -0.200 10.500 -0.200 13.100 5.700" fill="none" stroke="#3a9462" stroke-width="1.800"/><circle cx="7" cy="5.900" r="1.800" fill="#3a9462"/></svg>
<span class="t" id="t48" style="top:388.78px;font-size:11.5px;color:#a0a0a0;left:50.3px;transform-origin:0 50%;">C</span>
<span class="t" id="t49" style="top:388.78px;font-size:11.5px;color:#a0a0a0;left:120.6px;transform-origin:0 50%;transform:scaleX(1.0374);">Date of birth</span>
<div class="a" style="left:305px;top:393.29999999999995px;width:12px;height:1.8px;background:#4a4a4a;"></div>
<span class="t" id="t50" style="top:409.78px;font-size:11.5px;color:#a0a0a0;left:50.3px;transform-origin:0 50%;">D</span>
<span class="t" id="t51" style="top:409.78px;font-size:11.5px;color:#a0a0a0;left:120.6px;transform-origin:0 50%;">Age</span>
<div class="a" style="left:305px;top:414.29999999999995px;width:12px;height:1.8px;background:#4a4a4a;"></div>
<span class="t" id="t52" style="top:430.78px;font-size:11.5px;color:#111;left:50.3px;transform-origin:0 50%;">E</span>
<span class="t" id="t53" style="top:430.78px;font-size:11.5px;color:#111;left:120.6px;transform-origin:0 50%;transform:scaleX(1.0317);">Department</span>
<svg class="a" style="left:304px;top:431.2px" width="14" height="9" viewBox="0 0 14 9"><path d="M0.900 5.700 C3.500 -0.200 10.500 -0.200 13.100 5.700" fill="none" stroke="#666" stroke-width="1.800"/><circle cx="7" cy="5.900" r="1.800" fill="#666"/></svg>
<span class="t" id="t54" style="top:451.78px;font-size:11.5px;color:#a0a0a0;left:50.3px;transform-origin:0 50%;">F</span>
<span class="t" id="t55" style="top:451.78px;font-size:11.5px;color:#a0a0a0;left:120.6px;transform-origin:0 50%;transform:scaleX(1.0154);">Income</span>
<div class="a" style="left:305px;top:456.29999999999995px;width:12px;height:1.8px;background:#4a4a4a;"></div>
<span class="t" id="t56" style="top:472.78px;font-size:11.5px;color:#111;left:50.3px;transform-origin:0 50%;">G</span>
<span class="t" id="t57" style="top:472.78px;font-size:11.5px;color:#111;left:120.6px;transform-origin:0 50%;transform:scaleX(1.0154);">Income</span>
<svg class="a" style="left:304px;top:473.2px" width="14" height="9" viewBox="0 0 14 9"><path d="M0.900 5.700 C3.500 -0.200 10.500 -0.200 13.100 5.700" fill="none" stroke="#666" stroke-width="1.800"/><circle cx="7" cy="5.900" r="1.800" fill="#666"/></svg>
<div class="a" style="left:336px;top:208px;width:1px;height:334px;background:#ababab;"></div>
<div class="a" style="left:333px;top:232px;width:3px;height:305px;background:#e6e6e6;"></div>
<div class="a" style="left:337px;top:208px;width:709px;height:306px;background:#fff;"></div>
<div class="a" style="left:337px;top:208px;width:709px;height:20px;background:#e6e6e6;"></div>
<div class="a" style="left:337px;top:208px;width:26px;height:306px;background:#e6e6e6;"></div>
<div class="a" style="left:433px;top:208px;width:139px;height:18px;background:#d2d2d2;"></div>
<div class="a" style="left:433px;top:226px;width:139px;height:2px;background:#217346;"></div>
<svg class="a" style="left:347px;top:213px" width="12" height="11" viewBox="0 0 12 11"><path d="M12 0 V11 H0Z" fill="#b7b7b7"/></svg>
<div class="a" style="left:363px;top:228px;width:370px;height:19px;background:#c6e0b4;"></div>
<div class="a" style="left:363px;top:247px;width:682px;height:1px;background:#d4d4d4;"></div>
<div class="a" style="left:363px;top:267px;width:682px;height:1px;background:#d4d4d4;"></div>
<div class="a" style="left:363px;top:287px;width:682px;height:1px;background:#d4d4d4;"></div>
<div class="a" style="left:363px;top:307px;width:682px;height:1px;background:#d4d4d4;"></div>
<div class="a" style="left:363px;top:327px;width:682px;height:1px;background:#d4d4d4;"></div>
<div class="a" style="left:363px;top:347px;width:682px;height:1px;background:#d4d4d4;"></div>
<div class="a" style="left:363px;top:367px;width:682px;height:1px;background:#d4d4d4;"></div>
<div class="a" style="left:363px;top:387px;width:682px;height:1px;background:#d4d4d4;"></div>
<div class="a" style="left:363px;top:407px;width:682px;height:1px;background:#d4d4d4;"></div>
<div class="a" style="left:363px;top:427px;width:682px;height:1px;background:#d4d4d4;"></div>
<div class="a" style="left:363px;top:447px;width:682px;height:1px;background:#d4d4d4;"></div>
<div class="a" style="left:363px;top:467px;width:682px;height:1px;background:#d4d4d4;"></div>
<div class="a" style="left:363px;top:487px;width:682px;height:1px;background:#d4d4d4;"></div>
<div class="a" style="left:363px;top:507px;width:682px;height:1px;background:#d4d4d4;"></div>
<div class="a" style="left:797px;top:228px;width:1px;height:286px;background:#d4d4d4;"></div>
<div class="a" style="left:861px;top:228px;width:1px;height:286px;background:#d4d4d4;"></div>
<div class="a" style="left:925px;top:228px;width:1px;height:286px;background:#d4d4d4;"></div>
<div class="a" style="left:989px;top:228px;width:1px;height:286px;background:#d4d4d4;"></div>
<div class="a" style="left:362px;top:208px;width:1px;height:19px;background:#b1b1b1;"></div>
<div class="a" style="left:432px;top:208px;width:1px;height:19px;background:#b1b1b1;"></div>
<div class="a" style="left:575px;top:208px;width:1px;height:19px;background:#b1b1b1;"></div>
<div class="a" style="left:665px;top:208px;width:1px;height:19px;background:#b1b1b1;"></div>
<div class="a" style="left:669px;top:208px;width:1px;height:19px;background:#b1b1b1;"></div>
<div class="a" style="left:733px;top:208px;width:1px;height:19px;background:#b1b1b1;"></div>
<div class="a" style="left:797px;top:208px;width:1px;height:19px;background:#b1b1b1;"></div>
<div class="a" style="left:861px;top:208px;width:1px;height:19px;background:#b1b1b1;"></div>
<div class="a" style="left:925px;top:208px;width:1px;height:19px;background:#b1b1b1;"></div>
<div class="a" style="left:989px;top:208px;width:1px;height:19px;background:#b1b1b1;"></div>
<div class="a" style="left:571px;top:208px;width:1px;height:18px;background:#bcbcbc;"></div>
<div class="a" style="left:572px;top:208px;width:3px;height:19px;background:#fafafa;"></div>
<div class="a" style="left:666px;top:208px;width:3px;height:19px;background:#ededed;"></div>
<div class="a" style="left:337px;top:227px;width:708px;height:1px;background:#9e9e9e;"></div>
<div class="a" style="left:433px;top:226px;width:139px;height:2px;background:#217346;"></div>
<div class="a" style="left:337px;top:247px;width:25px;height:1px;background:#b1b1b1;"></div>
<div class="a" style="left:337px;top:267px;width:25px;height:1px;background:#b1b1b1;"></div>
<div class="a" style="left:337px;top:287px;width:25px;height:1px;background:#b1b1b1;"></div>
<div class="a" style="left:337px;top:307px;width:25px;height:1px;background:#b1b1b1;"></div>
<div class="a" style="left:337px;top:327px;width:25px;height:1px;background:#b1b1b1;"></div>
<div class="a" style="left:337px;top:347px;width:25px;height:1px;background:#b1b1b1;"></div>
<div class="a" style="left:337px;top:367px;width:25px;height:1px;background:#b1b1b1;"></div>
<div class="a" style="left:337px;top:387px;width:25px;height:1px;background:#b1b1b1;"></div>
<div class="a" style="left:337px;top:407px;width:25px;height:1px;background:#b1b1b1;"></div>
<div class="a" style="left:337px;top:427px;width:25px;height:1px;background:#b1b1b1;"></div>
<div class="a" style="left:337px;top:447px;width:25px;height:1px;background:#b1b1b1;"></div>
<div class="a" style="left:337px;top:467px;width:25px;height:1px;background:#b1b1b1;"></div>
<div class="a" style="left:337px;top:487px;width:25px;height:1px;background:#b1b1b1;"></div>
<div class="a" style="left:337px;top:507px;width:25px;height:1px;background:#b1b1b1;"></div>
<div class="a" style="left:362px;top:228px;width:1px;height:286px;background:#9e9e9e;"></div>
<div class="a" style="left:363px;top:247px;width:371px;height:1px;background:#a6a6a6;"></div>
<div class="a" style="left:363px;top:267px;width:371px;height:1px;background:#a6a6a6;"></div>
<div class="a" style="left:363px;top:287px;width:371px;height:1px;background:#a6a6a6;"></div>
<div class="a" style="left:363px;top:307px;width:371px;height:1px;background:#a6a6a6;"></div>
<div class="a" style="left:363px;top:327px;width:371px;height:1px;background:#a6a6a6;"></div>
<div class="a" style="left:363px;top:347px;width:371px;height:1px;background:#a6a6a6;"></div>
<div class="a" style="left:363px;top:367px;width:371px;height:1px;background:#a6a6a6;"></div>
<div class="a" style="left:363px;top:387px;width:371px;height:1px;background:#a6a6a6;"></div>
<div class="a" style="left:363px;top:407px;width:371px;height:1px;background:#a6a6a6;"></div>
<div class="a" style="left:363px;top:427px;width:371px;height:1px;background:#a6a6a6;"></div>
<div class="a" style="left:363px;top:447px;width:371px;height:1px;background:#a6a6a6;"></div>
<div class="a" style="left:363px;top:467px;width:371px;height:1px;background:#a6a6a6;"></div>
<div class="a" style="left:363px;top:487px;width:371px;height:1px;background:#a6a6a6;"></div>
<div class="a" style="left:363px;top:507px;width:371px;height:1px;background:#a6a6a6;"></div>
<div class="a" style="left:432px;top:228px;width:1px;height:286px;background:#a6a6a6;"></div>
<div class="a" style="left:573px;top:228px;width:1px;height:286px;background:#a6a6a6;"></div>
<div class="a" style="left:667px;top:228px;width:1px;height:286px;background:#a6a6a6;"></div>
<div class="a" style="left:733px;top:228px;width:1px;height:280px;background:#a6a6a6;"></div>
<div class="a" style="left:733px;top:508px;width:1px;height:6px;background:#d4d4d4;"></div>
<div class="a" style="left:1045px;top:227px;width:1px;height:287px;background:#9a9a9a;"></div>
<span class="t" id="t58" style="top:212.55px;font-size:13px;color:#333;left:397.0px;transform-origin:50% 50%;transform:translateX(-50%);">A</span>
<span class="t" id="t59" style="top:212.55px;font-size:13px;color:#217346;left:502.5px;transform-origin:50% 50%;transform:translateX(-50%) scaleX(0.8649);">B</span>
<span class="t" id="t60" style="top:212.55px;font-size:13px;color:#333;left:620.0px;transform-origin:50% 50%;transform:translateX(-50%);">E</span>
<span class="t" id="t61" style="top:212.55px;font-size:13px;color:#333;left:701.0px;transform-origin:50% 50%;transform:translateX(-50%);">G</span>
<span class="t" id="t62" style="top:212.55px;font-size:13px;color:#333;left:765.0px;transform-origin:50% 50%;transform:translateX(-50%);">H</span>
<span class="t" id="t63" style="top:212.55px;font-size:13px;color:#333;left:829.0px;transform-origin:50% 50%;transform:translateX(-50%);">I</span>
<span class="t" id="t64" style="top:212.55px;font-size:13px;color:#333;left:893.0px;transform-origin:50% 50%;transform:translateX(-50%);">J</span>
<span class="t" id="t65" style="top:212.55px;font-size:13px;color:#333;left:957.0px;transform-origin:50% 50%;transform:translateX(-50%);">K</span>
<span class="t" id="t66" style="top:212.55px;font-size:13px;color:#333;left:1022.3px;transform-origin:50% 50%;transform:translateX(-50%);">L</span>
<span class="t" id="t67" style="top:231.65px;font-size:13px;color:#222;left:349.8px;transform-origin:50% 50%;transform:translateX(-50%) scaleX(0.9123);">1</span>
<span class="t" id="t68" style="top:251.65px;font-size:13px;color:#222;left:349.8px;transform-origin:50% 50%;transform:translateX(-50%) scaleX(0.9123);">2</span>
<span class="t" id="t69" style="top:271.65px;font-size:13px;color:#222;left:349.8px;transform-origin:50% 50%;transform:translateX(-50%) scaleX(0.9123);">3</span>
<span class="t" id="t70" style="top:291.65px;font-size:13px;color:#222;left:349.8px;transform-origin:50% 50%;transform:translateX(-50%) scaleX(0.9123);">4</span>
<span class="t" id="t71" style="top:311.65px;font-size:13px;color:#222;left:349.8px;transform-origin:50% 50%;transform:translateX(-50%) scaleX(0.9123);">5</span>
<span class="t" id="t72" style="top:331.65px;font-size:13px;color:#222;left:349.8px;transform-origin:50% 50%;transform:translateX(-50%) scaleX(0.9123);">6</span>
<span class="t" id="t73" style="top:351.65px;font-size:13px;color:#222;left:349.8px;transform-origin:50% 50%;transform:translateX(-50%) scaleX(0.9123);">7</span>
<span class="t" id="t74" style="top:371.65px;font-size:13px;color:#222;left:349.8px;transform-origin:50% 50%;transform:translateX(-50%) scaleX(0.9123);">8</span>
<span class="t" id="t75" style="top:391.65px;font-size:13px;color:#222;left:349.8px;transform-origin:50% 50%;transform:translateX(-50%) scaleX(0.9123);">9</span>
<span class="t" id="t76" style="top:411.65px;font-size:13px;color:#222;left:349.8px;transform-origin:50% 50%;transform:translateX(-50%) scaleX(0.9330);">10</span>
<span class="t" id="t77" style="top:431.65px;font-size:13px;color:#222;left:349.8px;transform-origin:50% 50%;transform:translateX(-50%);">11</span>
<span class="t" id="t78" style="top:451.65px;font-size:13px;color:#222;left:349.8px;transform-origin:50% 50%;transform:translateX(-50%) scaleX(0.9330);">12</span>
<span class="t" id="t79" style="top:471.65px;font-size:13px;color:#222;left:349.8px;transform-origin:50% 50%;transform:translateX(-50%) scaleX(0.9330);">13</span>
<span class="t" id="t80" style="top:491.65px;font-size:13px;color:#222;left:349.8px;transform-origin:50% 50%;transform:translateX(-50%) scaleX(0.9330);">14</span>
<span class="t" id="t81" style="top:231.80px;font-size:13.3px;color:#000;font-weight:700;left:397.3px;transform-origin:50% 50%;transform:translateX(-50%) scaleX(1.1643);">ID</span>
<span class="t" id="t82" style="top:231.80px;font-size:13.3px;color:#000;font-weight:700;left:434.9px;transform-origin:0 50%;transform:scaleX(1.0050);">Name</span>
<span class="t" id="t83" style="top:231.80px;font-size:13.3px;color:#000;font-weight:700;left:575.8px;transform-origin:0 50%;transform:scaleX(1.0204);">Department</span>
<span class="t" id="t84" style="top:231.80px;font-size:13.3px;color:#000;font-weight:700;left:670px;transform-origin:0 50%;transform:scaleX(0.9750);">Income</span>
<span class="t" id="t85" style="top:251.80px;font-size:13.3px;color:#000;left:397.7px;transform-origin:50% 50%;transform:translateX(-50%) scaleX(0.9466);">1-001</span>
<span class="t" id="t86" style="top:251.80px;font-size:13.3px;color:#000;left:434.8px;transform-origin:0 50%;transform:scaleX(0.8905);">FERMIN GUTIERREZ</span>
<span class="t" id="t87" style="top:251.80px;font-size:13.3px;color:#000;left:575.9px;transform-origin:0 50%;transform:scaleX(1.0789);">Marketing</span>
<span class="t" id="t88" style="top:251.80px;font-size:13.3px;color:#000;right:337.20000000000005px;transform-origin:100% 50%;transform:scaleX(0.9285);">192</span>
<span class="t" id="t89" style="top:271.80px;font-size:13.3px;color:#000;left:397.7px;transform-origin:50% 50%;transform:translateX(-50%) scaleX(0.9466);">1-002</span>
<span class="t" id="t90" style="top:271.80px;font-size:13.3px;color:#000;left:434.8px;transform-origin:0 50%;transform:scaleX(0.9247);">JOSE AVILA</span>
<span class="t" id="t91" style="top:271.80px;font-size:13.3px;color:#000;left:575.9px;transform-origin:0 50%;transform:scaleX(1.0789);">Marketing</span>
<span class="t" id="t92" style="top:271.80px;font-size:13.3px;color:#000;right:337.20000000000005px;transform-origin:100% 50%;transform:scaleX(0.9285);">196</span>
<span class="t" id="t93" style="top:291.80px;font-size:13.3px;color:#000;left:397.7px;transform-origin:50% 50%;transform:translateX(-50%) scaleX(0.9466);">1-003</span>
<span class="t" id="t94" style="top:291.80px;font-size:13.3px;color:#000;left:434.8px;transform-origin:0 50%;transform:scaleX(0.9251);">ABEL NUNEZ</span>
<span class="t" id="t95" style="top:291.80px;font-size:13.3px;color:#000;left:575.9px;transform-origin:0 50%;transform:scaleX(1.0789);">Marketing</span>
<span class="t" id="t96" style="top:291.80px;font-size:13.3px;color:#000;right:337.20000000000005px;transform-origin:100% 50%;transform:scaleX(0.9326);">84</span>
<span class="t" id="t97" style="top:311.80px;font-size:13.3px;color:#000;left:397.7px;transform-origin:50% 50%;transform:translateX(-50%) scaleX(0.9466);">1-004</span>
<span class="t" id="t98" style="top:311.80px;font-size:13.3px;color:#000;left:434.8px;transform-origin:0 50%;transform:scaleX(0.9782);">BATTON TATUM</span>
<span class="t" id="t99" style="top:311.80px;font-size:13.3px;color:#000;left:575.9px;transform-origin:0 50%;transform:scaleX(1.0789);">Marketing</span>
<span class="t" id="t100" style="top:311.80px;font-size:13.3px;color:#000;right:337.20000000000005px;transform-origin:100% 50%;transform:scaleX(0.9285);">165</span>
<span class="t" id="t101" style="top:331.80px;font-size:13.3px;color:#000;left:397.7px;transform-origin:50% 50%;transform:translateX(-50%) scaleX(0.9466);">2-001</span>
<span class="t" id="t102" style="top:331.80px;font-size:13.3px;color:#000;left:434.8px;transform-origin:0 50%;transform:scaleX(0.9101);">JUAN C GONZALEZ</span>
<span class="t" id="t103" style="top:331.80px;font-size:13.3px;color:#000;left:575.9px;transform-origin:0 50%;transform:scaleX(0.9106);">HR</span>
<span class="t" id="t104" style="top:331.80px;font-size:13.3px;color:#000;right:337.20000000000005px;transform-origin:100% 50%;transform:scaleX(0.9326);">98</span>
<span class="t" id="t105" style="top:351.80px;font-size:13.3px;color:#000;left:397.7px;transform-origin:50% 50%;transform:translateX(-50%) scaleX(0.9466);">2-002</span>
<span class="t" id="t106" style="top:351.80px;font-size:13.3px;color:#000;left:434.8px;transform-origin:0 50%;transform:scaleX(0.9228);">EMILIE FUTTERMAN</span>
<span class="t" id="t107" style="top:351.80px;font-size:13.3px;color:#000;left:575.9px;transform-origin:0 50%;transform:scaleX(0.9106);">HR</span>
<span class="t" id="t108" style="top:351.80px;font-size:13.3px;color:#000;right:337.20000000000005px;transform-origin:100% 50%;transform:scaleX(0.9285);">137</span>
<span class="t" id="t109" style="top:371.80px;font-size:13.3px;color:#000;left:397.7px;transform-origin:50% 50%;transform:translateX(-50%) scaleX(0.9466);">2-003</span>
<span class="t" id="t110" style="top:371.80px;font-size:13.3px;color:#000;left:434.8px;transform-origin:0 50%;transform:scaleX(0.9512);">ANH VU</span>
<span class="t" id="t111" style="top:371.80px;font-size:13.3px;color:#000;left:575.9px;transform-origin:0 50%;transform:scaleX(0.9106);">HR</span>
<span class="t" id="t112" style="top:371.80px;font-size:13.3px;color:#000;right:337.20000000000005px;transform-origin:100% 50%;transform:scaleX(0.9285);">200</span>
<span class="t" id="t113" style="top:391.80px;font-size:13.3px;color:#000;left:397.7px;transform-origin:50% 50%;transform:translateX(-50%) scaleX(0.9466);">3-001</span>
<span class="t" id="t114" style="top:391.80px;font-size:13.3px;color:#000;left:434.8px;transform-origin:0 50%;transform:scaleX(0.9626);">MARIA R DE MANCIA</span>
<span class="t" id="t115" style="top:391.80px;font-size:13.3px;color:#000;left:575.9px;transform-origin:0 50%;transform:scaleX(1.0145);">IT</span>
<span class="t" id="t116" style="top:391.80px;font-size:13.3px;color:#000;right:337.20000000000005px;transform-origin:100% 50%;transform:scaleX(0.9285);">171</span>
<span class="t" id="t117" style="top:411.80px;font-size:13.3px;color:#000;left:397.7px;transform-origin:50% 50%;transform:translateX(-50%) scaleX(0.9466);">3-002</span>
<span class="t" id="t118" style="top:411.80px;font-size:13.3px;color:#000;left:434.8px;transform-origin:0 50%;transform:scaleX(0.9201);">ROSA GARCIA</span>
<span class="t" id="t119" style="top:411.80px;font-size:13.3px;color:#000;left:575.9px;transform-origin:0 50%;transform:scaleX(1.0145);">IT</span>
<span class="t" id="t120" style="top:411.80px;font-size:13.3px;color:#000;right:337.20000000000005px;transform-origin:100% 50%;transform:scaleX(0.9285);">177</span>
<span class="t" id="t121" style="top:431.80px;font-size:13.3px;color:#000;left:397.7px;transform-origin:50% 50%;transform:translateX(-50%) scaleX(0.9466);">3-003</span>
<span class="t" id="t122" style="top:431.80px;font-size:13.3px;color:#000;left:434.8px;transform-origin:0 50%;transform:scaleX(0.9308);">MARCOS POLANCO</span>
<span class="t" id="t123" style="top:431.80px;font-size:13.3px;color:#000;left:575.9px;transform-origin:0 50%;transform:scaleX(1.0145);">IT</span>
<span class="t" id="t124" style="top:431.80px;font-size:13.3px;color:#000;right:337.20000000000005px;transform-origin:100% 50%;transform:scaleX(0.9285);">154</span>
<span class="t" id="t125" style="top:451.80px;font-size:13.3px;color:#000;left:397.7px;transform-origin:50% 50%;transform:translateX(-50%) scaleX(0.9466);">4-001</span>
<span class="t" id="t126" style="top:451.80px;font-size:13.3px;color:#000;left:434.8px;transform-origin:0 50%;transform:scaleX(0.9616);">MARIAN GARCIA</span>
<span class="t" id="t127" style="top:451.80px;font-size:13.3px;color:#000;left:575.9px;transform-origin:0 50%;transform:scaleX(1.0251);">Finance</span>
<span class="t" id="t128" style="top:451.80px;font-size:13.3px;color:#000;right:337.20000000000005px;transform-origin:100% 50%;transform:scaleX(0.9716);">117</span>
<span class="t" id="t129" style="top:471.80px;font-size:13.3px;color:#000;left:397.7px;transform-origin:50% 50%;transform:translateX(-50%) scaleX(0.9466);">4-002</span>
<span class="t" id="t130" style="top:471.80px;font-size:13.3px;color:#000;left:434.8px;transform-origin:0 50%;transform:scaleX(0.9158);">GARY POOL</span>
<span class="t" id="t131" style="top:471.80px;font-size:13.3px;color:#000;left:575.9px;transform-origin:0 50%;transform:scaleX(1.0251);">Finance</span>
<span class="t" id="t132" style="top:471.80px;font-size:13.3px;color:#000;right:337.20000000000005px;transform-origin:100% 50%;transform:scaleX(0.9285);">100</span>
<span class="t" id="t133" style="top:491.80px;font-size:13.3px;color:#000;left:397.7px;transform-origin:50% 50%;transform:translateX(-50%) scaleX(0.9466);">4-003</span>
<span class="t" id="t134" style="top:491.80px;font-size:13.3px;color:#000;left:434.8px;transform-origin:0 50%;transform:scaleX(0.9318);">DAN LEUNG</span>
<span class="t" id="t135" style="top:491.80px;font-size:13.3px;color:#000;left:575.9px;transform-origin:0 50%;transform:scaleX(1.0251);">Finance</span>
<span class="t" id="t136" style="top:491.80px;font-size:13.3px;color:#000;right:337.20000000000005px;transform-origin:100% 50%;transform:scaleX(0.9285);">164</span>
<div class="a" style="left:1049px;top:224px;width:15px;height:277px;background:#f0f0f0;"></div>
<div class="a" style="left:1049px;top:210px;width:15px;height:15px;background:#fff;border:1px solid #999;box-sizing:border-box;"></div>
<svg class="a" style="left:1053px;top:215px" width="7" height="5" viewBox="0 0 7 5"><path d="M0 4.500h7l-3.500-4z" fill="#222"/></svg>
<div class="a" style="left:1049px;top:225px;width:15px;height:196px;background:#fff;border:1px solid #8e8e8e;box-sizing:border-box;"></div>
<div class="a" style="left:1049px;top:500px;width:15px;height:15px;background:#fff;border:1px solid #999;box-sizing:border-box;"></div>
<svg class="a" style="left:1053px;top:505px" width="7" height="5" viewBox="0 0 7 5"><path d="M0 0.500h7l-3.500 4z" fill="#222"/></svg>
<div class="a" style="left:337px;top:514px;width:710px;height:28px;background:#e6e6e6;"></div>
<div class="a" style="left:337px;top:514px;width:709px;height:1px;background:#ababab;"></div>
<div class="a" style="left:437px;top:514px;width:91px;height:25px;background:#fff;"></div>
<div class="a" style="left:437px;top:537px;width:91px;height:2px;background:#217346;"></div>
<div class="a" style="left:437px;top:514px;width:1px;height:23px;background:#c6c6c6;"></div>
<div class="a" style="left:527px;top:514px;width:1px;height:23px;background:#c6c6c6;"></div>
<span class="t" id="t137" style="top:520.95px;font-size:13px;color:#217346;font-weight:700;left:449.3px;transform-origin:0 50%;transform:scaleX(0.9559);">Personnels</span>
<svg class="a" style="left:363px;top:523px" width="5" height="9" viewBox="0 0 5 9"><path d="M5 0.500V8.500L0.500 4.500Z" fill="#c4c4c4"/></svg>
<svg class="a" style="left:393px;top:523px" width="5" height="9" viewBox="0 0 5 9"><path d="M0 0.500V8.500L4.500 4.500Z" fill="#c4c4c4"/></svg>
<svg class="a" style="left:560px;top:519px" width="18" height="18" viewBox="0 0 18 18"><circle cx="9" cy="8.500" r="7.500" fill="none" stroke="#666" stroke-width="1.100"/><path d="M9 4.500v8 M5 8.500h8" stroke="#666" stroke-width="1.300"/></svg>
<div class="a" style="left:775px;top:524px;width:1.5px;height:1.5px;background:#b0b0b0;"></div>
<div class="a" style="left:775px;top:528px;width:1.5px;height:1.5px;background:#b0b0b0;"></div>
<div class="a" style="left:775px;top:532px;width:1.5px;height:1.5px;background:#b0b0b0;"></div>
<div class="a" style="left:792px;top:521px;width:255px;height:15px;background:#f0f0f0;"></div>
<div class="a" style="left:792px;top:521px;width:15px;height:15px;background:#fff;border:1px solid #ababab;box-sizing:border-box;"></div>
<svg class="a" style="left:797px;top:525px" width="5" height="7" viewBox="0 0 5 7"><path d="M4.500 0V7L0.500 3.500Z" fill="#222"/></svg>
<div class="a" style="left:806px;top:521px;width:201px;height:15px;background:#fff;border:1px solid #8e8e8e;box-sizing:border-box;"></div>
<div class="a" style="left:1031px;top:521px;width:15px;height:15px;background:#fff;border:1px solid #ababab;box-sizing:border-box;"></div>
<svg class="a" style="left:1037px;top:525px" width="5" height="7" viewBox="0 0 5 7"><path d="M0.500 0V7L4.500 3.500Z" fill="#222"/></svg>
<div class="a" style="left:1px;top:542px;width:1066px;height:22px;background:#f3f2f1;"></div>
<div class="a" style="left:1px;top:541px;width:336px;height:1px;background:#8c8c8c;"></div>
<div class="a" style="left:2px;top:540px;width:334px;height:1px;background:#dcdcdc;"></div>
<div class="a" style="left:337px;top:542px;width:730px;height:1px;background:#c8c8c8;"></div>
<span class="t" id="t138" style="top:548.58px;font-size:11.3px;color:#444;left:8.5px;transform-origin:0 50%;transform:scaleX(0.9309);">Ready</span>
<svg class="a" style="left:59px;top:547px" width="15" height="13" viewBox="0 0 15 13"><path d="M0.500 0.500h13v2.500h-13z M0.500 3v9.500h6" fill="none" stroke="#444" stroke-width="1"/><path d="M2.500 5.500h3 M2.500 7.800h2.500 M2.500 10h2.500" stroke="#444" stroke-width="0.900"/><circle cx="10" cy="8.500" r="3.600" fill="none" stroke="#444" stroke-width="1"/><circle cx="10" cy="8.500" r="1.600" fill="#444"/></svg>
<svg class="a" style="left:91px;top:546px" width="15" height="15" viewBox="0 0 15 15"><circle cx="5.500" cy="2.200" r="1.600" fill="none" stroke="#444" stroke-width="0.900"/><path d="M0.800 5 C3.500 6.200 7.500 6.200 10.200 5 M4 6v3.500l-1.800 4.500 M7 6v3.500l1 2.500" fill="none" stroke="#444" stroke-width="1"/><path d="M8.500 11.500 L10.500 13.500 L14.500 8.500" fill="none" stroke="#444" stroke-width="1"/></svg>
<span class="t" id="t139" style="top:548.58px;font-size:11.3px;color:#444;left:108.3px;transform-origin:0 50%;transform:scaleX(1.0202);">Accessibility: Good to go</span>
<svg class="a" style="left:639px;top:546px" width="14" height="14" viewBox="0 0 14 14"><path d="M6 9.500h-5.500v-9h10v4" fill="none" stroke="#444" stroke-width="1"/><circle cx="9.500" cy="9.500" r="2" fill="none" stroke="#444" stroke-width="1.200"/><path d="M9.500 5.500v1.500 M9.500 12v1.500 M5.500 9.500h1.500 M12 9.500h1.500 M6.700 6.700l1 1 M11.300 11.300l1 1 M12.300 6.700l-1 1 M7.700 11.300l-1 1" stroke="#444" stroke-width="1.100"/></svg>
<span class="t" id="t140" style="top:548.58px;font-size:11.3px;color:#444;left:655.5px;transform-origin:0 50%;transform:scaleX(1.0062);">Display Settings</span>
<div class="a" style="left:756px;top:543px;width:40px;height:20px;background:#c8c6c4;"></div>
<svg class="a" style="left:769px;top:546px" width="14" height="13" viewBox="0 0 14 13"><rect x="0.500" y="0.500" width="12.500" height="11.500" fill="none" stroke="#333"/><path d="M0.500 4.500h12.500 M0.500 8.500h12.500 M4.700 0.500v11.500 M8.800 0.500v11.500" stroke="#333" stroke-width="0.900"/></svg>
<svg class="a" style="left:809px;top:546px" width="15" height="14" viewBox="0 0 15 14"><rect x="0.600" y="0.600" width="13" height="12" fill="none" stroke="#444" stroke-width="1.200"/><rect x="3.500" y="3.500" width="7" height="6.500" fill="none" stroke="#444" stroke-width="0.900"/><path d="M5 5.500h4 M5 7.700h4" stroke="#444" stroke-width="0.800"/></svg>
<svg class="a" style="left:849px;top:546px" width="15" height="14" viewBox="0 0 15 14"><rect x="0.600" y="0.600" width="13" height="12" fill="none" stroke="#444" stroke-width="1.200"/><path d="M4.600 0.500v6h4.800v-6" fill="none" stroke="#444" stroke-width="1.100"/></svg>
<div class="a" style="left:882.5px;top:552px;width:7px;height:1px;background:#444;"></div>
<div class="a" style="left:895px;top:552px;width:100px;height:1px;background:#666;"></div>
<div class="a" style="left:943px;top:547px;width:5.5px;height:12px;background:#444;"></div>
<div class="a" style="left:1000px;top:552px;width:7.5px;height:1px;background:#444;"></div>
<div class="a" style="left:1003.2px;top:548.8px;width:1px;height:7.5px;background:#444;"></div>
<span class="t" id="t141" style="top:548.58px;font-size:11.3px;color:#444;left:1021.4px;transform-origin:0 50%;transform:scaleX(0.9168);">100%</span>
</body></html>
